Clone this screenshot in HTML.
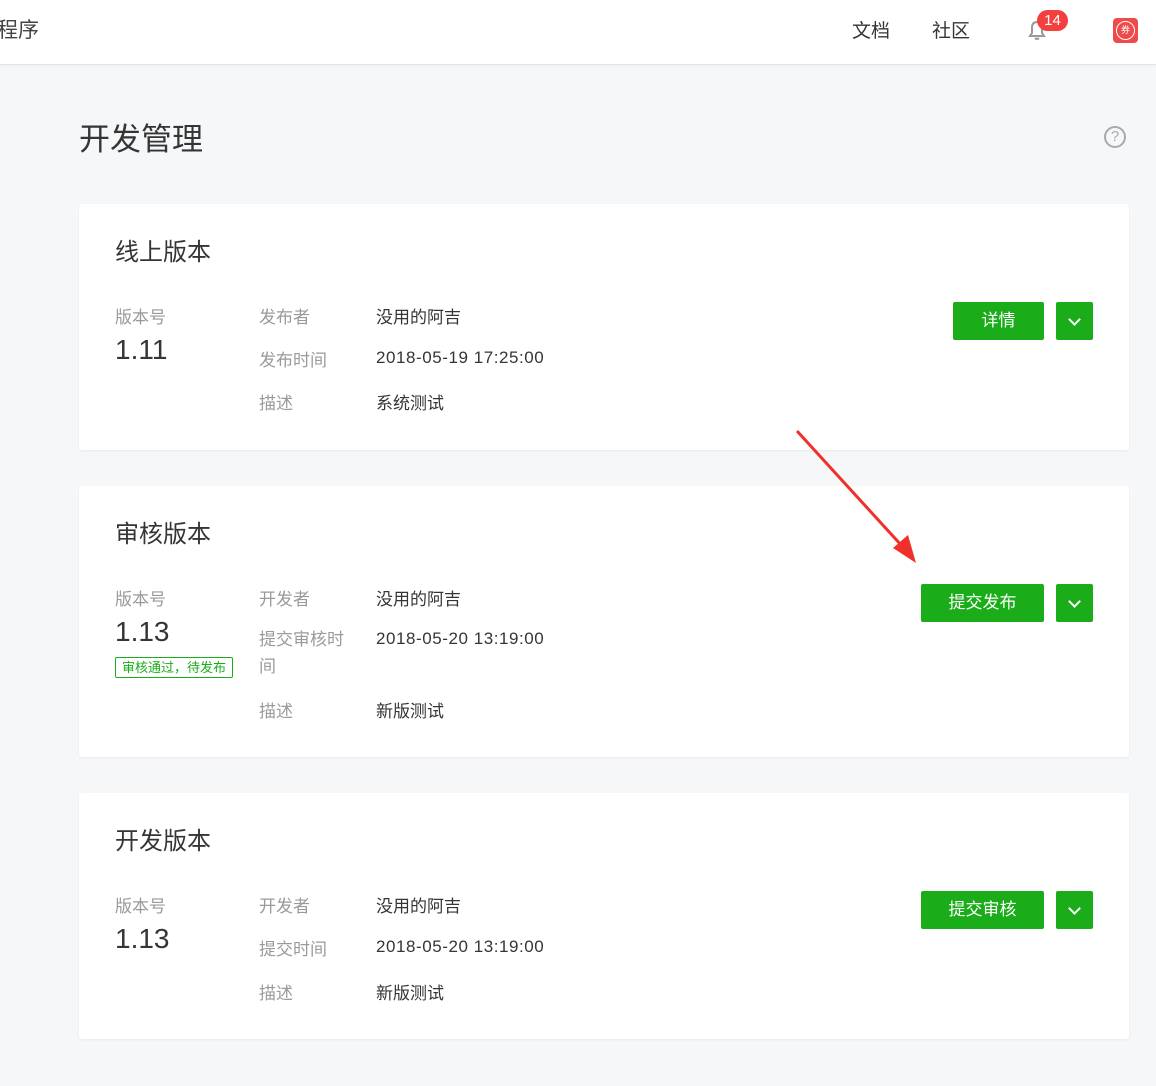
<!DOCTYPE html>
<html><head><meta charset="utf-8"><style>
*{margin:0;padding:0;box-sizing:border-box}
body{width:1156px;height:1086px;background:#f6f7f9;font-family:"Liberation Sans","Noto Sans CJK SC",sans-serif;position:relative;overflow:hidden;color:#353535}
.a{position:absolute;white-space:nowrap}
.hdr{position:absolute;left:0;top:0;width:1156px;height:65px;background:#fff;border-bottom:1px solid #e4e4e6;box-shadow:0 1px 2px rgba(0,0,0,.04)}
.card{position:absolute;left:79px;width:1050px;background:#fff;border-radius:3px;box-shadow:0 1px 2px rgba(0,0,0,.06)}
.t{font-size:24px;color:#353535}
.l{font-size:17px;color:#9a9a9a}
.v{font-size:17px;color:#353535}
.d{font-size:17px;color:#353535;letter-spacing:0.55px}
.n{font-size:28px;color:#353535}
.btn{position:absolute;height:38px;background:#1aad19;color:#fff;font-size:17px;text-align:center;line-height:38px;border-radius:2px}
.dd{position:absolute;width:37px;height:38px;background:#1aad19;border-radius:2px}
.dd:after{content:"";position:absolute;left:14px;top:13px;width:7px;height:7px;border-right:2px solid #fff;border-bottom:2px solid #fff;transform:rotate(45deg)}
</style></head><body>
<div class="hdr">
<div class="a" style="left:-3px;top:14px;font-size:21px;color:#444">程序</div>
<div class="a" style="left:852px;top:16px;font-size:19px;color:#353535">文档</div>
<div class="a" style="left:932px;top:16px;font-size:19px;color:#353535">社区</div>
<svg class="a" style="left:1025px;top:18px" width="24" height="24" viewBox="0 0 24 24"><path d="M5 18 L7 15 L7 10 Q7 4 12 4 Q17 4 17 10 L17 15 L19 18 Z M10 20 Q12 22 14 20" fill="none" stroke="#999" stroke-width="2"/></svg>
<div class="a" style="left:1037px;top:10px;width:31px;height:21px;background:#f43f3f;border-radius:11px;color:#fff;font-size:15px;text-align:center;line-height:21px">14</div>
<div class="a" style="left:1113px;top:18px;width:25px;height:25px;background:#f04a4a;border-radius:4px"><div style="position:absolute;left:3px;top:3px;width:19px;height:19px;border:1.5px solid #fff;border-radius:50%;color:#fff;font-size:9px;text-align:center;line-height:16px">券</div></div>
</div>
<div class="a" style="left:79px;top:114px;font-size:31px;color:#353535">开发管理</div>
<div class="a" style="left:1104px;top:126px;width:22px;height:22px;border:2px solid #aaa;border-radius:50%;color:#aaa;font-size:15px;text-align:center;line-height:18px">?</div>

<div class="card" style="top:204px;height:246px"></div>
<div class="a t" style="left:115px;top:232px">线上版本</div>
<div class="a l" style="left:115px;top:303px">版本号</div>
<div class="a n" style="left:115px;top:334px">1.11</div>
<div class="a l" style="left:259px;top:303px">发布者</div>
<div class="a v" style="left:376px;top:303px">没用的阿吉</div>
<div class="a l" style="left:259px;top:346px">发布时间</div>
<div class="a d" style="left:376px;top:348px">2018-05-19 17:25:00</div>
<div class="a l" style="left:259px;top:389px">描述</div>
<div class="a v" style="left:376px;top:389px">系统测试</div>
<div class="btn" style="left:953px;top:302px;width:91px">详情</div>
<div class="dd" style="left:1056px;top:302px"></div>

<div class="card" style="top:486px;height:271px"></div>
<div class="a t" style="left:115px;top:514px">审核版本</div>
<div class="a l" style="left:115px;top:585px">版本号</div>
<div class="a n" style="left:115px;top:616px">1.13</div>
<div class="a" style="left:115px;top:657px;width:118px;height:21px;border:1px solid #1aad19;border-radius:2px;color:#1aad19;font-size:13px;line-height:19px;text-align:center">审核通过，待发布</div>
<div class="a l" style="left:259px;top:626px;line-height:27px">提交审核时<br>间</div>
<div class="a l" style="left:259px;top:585px">开发者</div>
<div class="a v" style="left:376px;top:585px">没用的阿吉</div>
<div class="a d" style="left:376px;top:629px">2018-05-20 13:19:00</div>
<div class="a l" style="left:259px;top:697px">描述</div>
<div class="a v" style="left:376px;top:697px">新版测试</div>
<div class="btn" style="left:921px;top:584px;width:123px">提交发布</div>
<div class="dd" style="left:1056px;top:584px"></div>

<div class="card" style="top:793px;height:246px"></div>
<div class="a t" style="left:115px;top:821px">开发版本</div>
<div class="a l" style="left:115px;top:892px">版本号</div>
<div class="a n" style="left:115px;top:923px">1.13</div>
<div class="a l" style="left:259px;top:892px">开发者</div>
<div class="a v" style="left:376px;top:892px">没用的阿吉</div>
<div class="a l" style="left:259px;top:935px">提交时间</div>
<div class="a d" style="left:376px;top:937px">2018-05-20 13:19:00</div>
<div class="a l" style="left:259px;top:979px">描述</div>
<div class="a v" style="left:376px;top:979px">新版测试</div>
<div class="btn" style="left:921px;top:891px;width:123px">提交审核</div>
<div class="dd" style="left:1056px;top:891px"></div>

<svg class="a" style="left:0;top:0" width="1156" height="1086"><line x1="797" y1="431" x2="902" y2="546" stroke="#f0302a" stroke-width="3"/><polygon points="916,563 893,548 908,535" fill="#f0302a"/></svg>
</body></html>
